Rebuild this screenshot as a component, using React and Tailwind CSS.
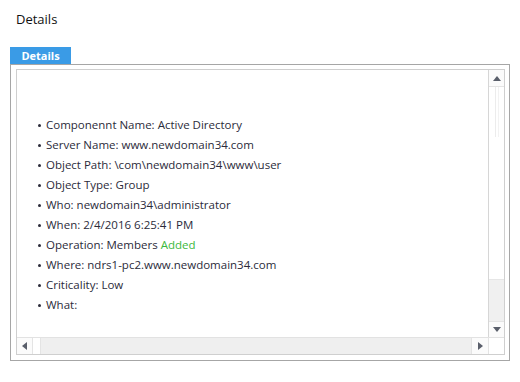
import React from "react";

const items = [
  ["Componennt Name: Active Directory"],
  ["Server Name: www.newdomain34.com"],
  ["Object Path: \\com\\newdomain34\\www\\user"],
  ["Object Type: Group"],
  ["Who: newdomain34\\administrator"],
  ["When: 2/4/2016 6:25:41 PM"],
  ["Operation: Members ", "Added"],
  ["Where: ndrs1-pc2.www.newdomain34.com"],
  ["Criticality: Low"],
  ["What:"],
];

function Arrow({ dir }) {
  const pts = {
    up: "1,6 5,1 9,6",
    down: "1,1 5,6 9,1",
    left: "6,1 1,5 6,9",
    right: "1,1 6,5 1,9",
  }[dir];
  const vert = dir === "up" || dir === "down";
  return (
    <svg width={vert ? 10 : 7} height={vert ? 7 : 10} viewBox={vert ? "0 0 10 7" : "0 0 7 10"}>
      <polygon points={pts} fill="#5a5f6b" />
    </svg>
  );
}

export default function App() {
  return (
    <div className="w-[520px] h-[382px] bg-white" style={{ fontFamily: '"Open Sans", sans-serif' }}>
      <div className="pt-[10px] pl-4 text-[13px] leading-[18px] text-[#111]">Details</div>
      <div className="mt-[19px] ml-[10px] w-[61px] h-[17px] bg-[#3a9be6] text-white font-bold text-[11px] leading-[17px] flex items-center justify-center">
        Details
      </div>
      <div className="ml-[10px] w-[500px] h-[297px] border border-[#a6a6a6] pt-[4px] pl-[5px]">
        <div className="w-[489px] h-[286px] border border-[#cfcfcf] flex flex-col">
          <div className="flex flex-1 min-h-0">
            <div className="flex-1 overflow-hidden pt-[45px] pl-[21px]">
              <ul className="text-[11.5px] leading-[20px] text-[#2b2b3a] whitespace-nowrap">
                {items.map((it, i) => (
                  <li key={i} className="flex items-center">
                    <span className="w-[3px] h-[3px] rounded-full bg-[#2b2b3a] mr-[5px]" />
                    <span>
                      {it[0]}
                      {it[1] && <span className="text-[#3cb83c]">{it[1]}</span>}
                    </span>
                  </li>
                ))}
              </ul>
            </div>
            <div className="w-[16px] border-l border-[#d6d6d6] flex flex-col">
              <div className="h-[17px] bg-[#fbfbfb] border-b border-[#e4e4e4] flex items-center justify-center">
                <Arrow dir="up" />
              </div>
              <div className="h-[193px] bg-white border-b border-[#e6e6e6] flex justify-center gap-[2px]">
                <div className="w-px h-[50px] bg-[#ececec]" />
                <div className="w-px h-[50px] bg-[#f2f2f2]" />
              </div>
              <div className="flex-1 bg-[#f0f0f0]" />
              <div className="h-[16px] bg-[#fbfbfb] border-t border-[#e4e4e4] flex items-center justify-center">
                <Arrow dir="down" />
              </div>
            </div>
          </div>
          <div className="h-[17px] flex border-t border-[#e2e2e2]">
            <div className="w-[16px] bg-[#fbfbfb] border-r border-[#e4e4e4] flex items-center justify-center">
              <Arrow dir="left" />
            </div>
            <div className="w-[8px] bg-white border-r border-[#e4e4e4]" />
            <div className="flex-1 bg-[#efefef]" />
            <div className="w-[17px] bg-[#fbfbfb] border-l border-[#e4e4e4] flex items-center justify-center">
              <Arrow dir="right" />
            </div>
            <div className="w-[16px] bg-white border-l border-[#e4e4e4]" />
          </div>
        </div>
      </div>
    </div>
  );
}
